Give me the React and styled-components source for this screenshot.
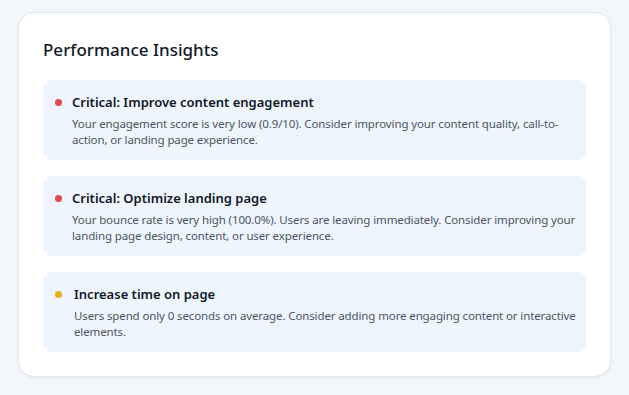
import React from "react";
import styled, { createGlobalStyle } from "styled-components";

const GlobalStyle = createGlobalStyle`
  body {
    margin: 0;
    background: #f3f6fa;
    font-family: "Noto Sans", "Open Sans", sans-serif;
  }
`;

const Page = styled.div`
  padding: 12px 18px 18px 18px;
`;

const Card = styled.section`
  background: #ffffff;
  border: 1px solid #e3e8ef;
  border-radius: 16px;
  box-shadow: 0 1px 3px rgba(15, 23, 42, 0.06);
  padding: 23px 24px 24px 24px;
`;

const Title = styled.h2`
  margin: 0 0 16px 0;
  font-size: 17px;
  line-height: 28px;
  font-weight: 500;
  color: #111827;
`;

const List = styled.div`
  display: flex;
  flex-direction: column;
  gap: 16px;
`;

const Item = styled.div`
  display: flex;
  gap: 10px;
  align-items: flex-start;
  background: #eef5fe;
  border-radius: 8px;
  padding: 12px 10px 12px 12px;
  min-height: 56px;
`;

const Dot = styled.span`
  flex: none;
  width: 7px;
  height: 7px;
  margin-top: 7px;
  margin-right: ${(p) => (p.$level === "critical" ? "0" : "2px")};
  border-radius: 50%;
  background: ${(p) => (p.$level === "critical" ? "#e5484d" : "#e6b012")};
`;

const Body = styled.div`
  display: flex;
  flex-direction: column;
  gap: 4px;
`;

const ItemTitle = styled.div`
  font-size: 13px;
  line-height: 20px;
  font-weight: 600;
  color: #111827;
`;

const Text = styled.p`
  margin: 0;
  font-size: 11.5px;
  line-height: 16px;
  letter-spacing: -0.12px;
  color: #4b5563;
`;

const insights = [
  {
    level: "critical",
    title: "Critical: Improve content engagement",
    text: "Your engagement score is very low (0.9/10). Consider improving your content quality, call-to-action, or landing page experience.",
  },
  {
    level: "critical",
    title: "Critical: Optimize landing page",
    text: "Your bounce rate is very high (100.0%). Users are leaving immediately. Consider improving your landing page design, content, or user experience.",
  },
  {
    level: "warning",
    title: "Increase time on page",
    text: "Users spend only 0 seconds on average. Consider adding more engaging content or interactive elements.",
  },
];

export default function App() {
  return (
    <Page>
      <GlobalStyle />
      <Card>
        <Title>Performance Insights</Title>
        <List>
          {insights.map((it) => (
            <Item key={it.title}>
              <Dot $level={it.level} />
              <Body>
                <ItemTitle>{it.title}</ItemTitle>
                <Text>{it.text}</Text>
              </Body>
            </Item>
          ))}
        </List>
      </Card>
    </Page>
  );
}
